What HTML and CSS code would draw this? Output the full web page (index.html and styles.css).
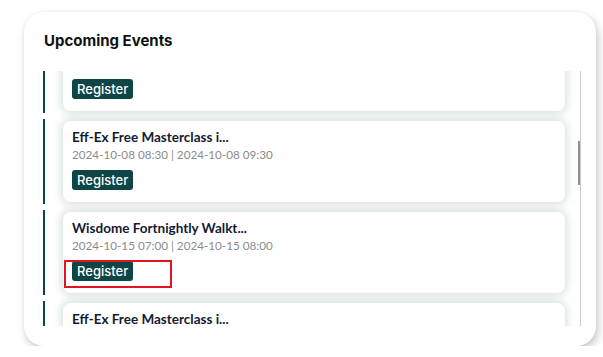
FILE: index.html
```html
<!DOCTYPE html>
<html lang="en">
<head>
  <meta charset="UTF-8" />
  <meta name="viewport" content="width=device-width, initial-scale=1.0"/>
  <title>Upcoming Events</title>
  <link rel="stylesheet" href="styles.css">
</head>
<body>
  <section class="panel">
    <h2>Upcoming Events</h2>

    <div class="list-wrap">
      <div class="event-list" id="eventList">
        <div class="event"><div class="event-card">
          <h3>Eff-Ex Free Masterclass i...</h3>
          <p class="fecha">2024-09-10 08:30 | 2024-09-10 09:30</p>
          <button>Register</button>
        </div></div>
        <div class="event"><div class="event-card">
          <h3>Wisdome Fortnightly Walkt...</h3>
          <p class="fecha">2024-09-17 07:00 | 2024-09-17 08:00</p>
          <button>Register</button>
        </div></div>
        <div class="event"><div class="event-card">
          <h3>Eff-Ex Free Masterclass i...</h3>
          <p class="fecha">2024-09-24 08:30 | 2024-09-24 09:30</p>
          <button>Register</button>
        </div></div>
        <div class="event"><div class="event-card">
          <h3>Wisdome Fortnightly Walkt...</h3>
          <p class="fecha">2024-10-01 07:00 | 2024-10-01 08:00</p>
          <button>Register</button>
        </div></div>
        <div class="event"><div class="event-card">
          <h3>Eff-Ex Free Masterclass i...</h3>
          <p class="fecha">2024-10-01 08:30 | 2024-10-01 09:30</p>
          <button>Register</button>
        </div></div>
        <div class="event"><div class="event-card">
          <h3>Eff-Ex Free Masterclass i...</h3>
          <p class="fecha">2024-10-08 08:30 | 2024-10-08 09:30</p>
          <button>Register</button>
        </div></div>
        <div class="event"><div class="event-card">
          <h3>Wisdome Fortnightly Walkt...</h3>
          <p class="fecha">2024-10-15 07:00 | 2024-10-15 08:00</p>
          <button>Register</button>
          <span class="marca"></span>
        </div></div>
        <div class="event"><div class="event-card">
          <h3>Eff-Ex Free Masterclass i...</h3>
          <p class="fecha">2024-10-15 08:30 | 2024-10-15 09:30</p>
          <button>Register</button>
        </div></div>
        <div class="event"><div class="event-card">
          <h3>Eff-Ex Free Masterclass i...</h3>
          <p class="fecha">2024-10-22 08:30 | 2024-10-22 09:30</p>
          <button>Register</button>
        </div></div>
        <div class="event"><div class="event-card">
          <h3>Wisdome Fortnightly Walkt...</h3>
          <p class="fecha">2024-10-29 07:00 | 2024-10-29 08:00</p>
          <button>Register</button>
        </div></div>
        <div class="event"><div class="event-card">
          <h3>Eff-Ex Free Masterclass i...</h3>
          <p class="fecha">2024-10-29 08:30 | 2024-10-29 09:30</p>
          <button>Register</button>
        </div></div>
        <div class="event"><div class="event-card">
          <h3>Eff-Ex Free Masterclass i...</h3>
          <p class="fecha">2024-11-05 08:30 | 2024-11-05 09:30</p>
          <button>Register</button>
        </div></div>
        <div class="event"><div class="event-card">
          <h3>Wisdome Fortnightly Walkt...</h3>
          <p class="fecha">2024-11-12 07:00 | 2024-11-12 08:00</p>
          <button>Register</button>
        </div></div>
        <div class="event"><div class="event-card">
          <h3>Eff-Ex Free Masterclass i...</h3>
          <p class="fecha">2024-11-12 08:30 | 2024-11-12 09:30</p>
          <button>Register</button>
        </div></div>
        <div class="event"><div class="event-card">
          <h3>Eff-Ex Free Masterclass i...</h3>
          <p class="fecha">2024-11-19 08:30 | 2024-11-19 09:30</p>
          <button>Register</button>
        </div></div>
        <div class="event"><div class="event-card">
          <h3>Wisdome Fortnightly Walkt...</h3>
          <p class="fecha">2024-11-26 07:00 | 2024-11-26 08:00</p>
          <button>Register</button>
        </div></div>
      </div>
      <span class="thumb"></span>
    </div>
  </section>

  <script>
    document.getElementById('eventList').scrollTop = 407;
  </script>
</body>
</html>
```

FILE: styles.css
```css
:root {
  --teal: #0e4546;
  --ink: #141a33;
  --gray: #8b8b8b;
  --glow: rgba(70, 110, 112, 0.22);
}

* {
  margin: 0;
  padding: 0;
  box-sizing: border-box;
}

body {
  background: #fff;
  font-family: 'Lato', 'Open Sans', sans-serif;
  padding: 12px 7px 0 24px;
}

.panel {
  background: #fff;
  height: 334px;
  border-radius: 20px;
  box-shadow: 2px 4px 8px rgba(0,0,0,0.22), 0 0 3px rgba(0,0,0,0.05);
  padding: 19px 15px 0 19px;
}
.panel h2 {
  font-family: 'Inter', sans-serif;
  font-size: 15px;
  font-weight: 700;
  line-height: 20px;
  color: #111;
  margin-left: 1px;
  margin-bottom: 20px;
}

/* la barra de desplazamiento se dibuja a mano */
.list-wrap {
  position: relative;
  border-right: 1px solid #c9cbcc;
}
.event-list {
  height: 255px;
  overflow-y: auto;
  scrollbar-width: none;
}
.event-list::-webkit-scrollbar {
  display: none;
}
.thumb {
  position: absolute;
  right: 0;
  top: 70px;
  width: 2px;
  height: 44px;
  background: #8d9296;
}

.event {
  border-left: 2px solid var(--teal);
  padding: 2px 15px 2px 18px;
  margin-bottom: 6px;
}
.event-card {
  position: relative;
  background: #fff;
  border-radius: 8px;
  box-shadow: 0 0 9px 2px var(--glow);
  padding: 7px 9px 11px;
  height: 81px;
}
.event-card h3 {
  font-size: 13.5px;
  font-weight: 700;
  line-height: 18px;
  color: var(--ink);
}
.fecha {
  font-size: 11.7px;
  line-height: 16px;
  color: var(--gray);
}
.event-card button {
  display: block;
  margin-top: 8px;
  background: var(--teal);
  color: #fff;
  border: none;
  border-radius: 3px;
  font-family: 'Inter', sans-serif;
  font-size: 13px;
  font-weight: 500;
  line-height: 20px;
  padding: 0 5px;
  cursor: pointer;
}

/* recuadro de resaltado sobre el botón */
.marca {
  position: absolute;
  left: 1px;
  top: 48px;
  width: 108px;
  height: 28px;
  border: 2px solid #e3141e;
}
```
